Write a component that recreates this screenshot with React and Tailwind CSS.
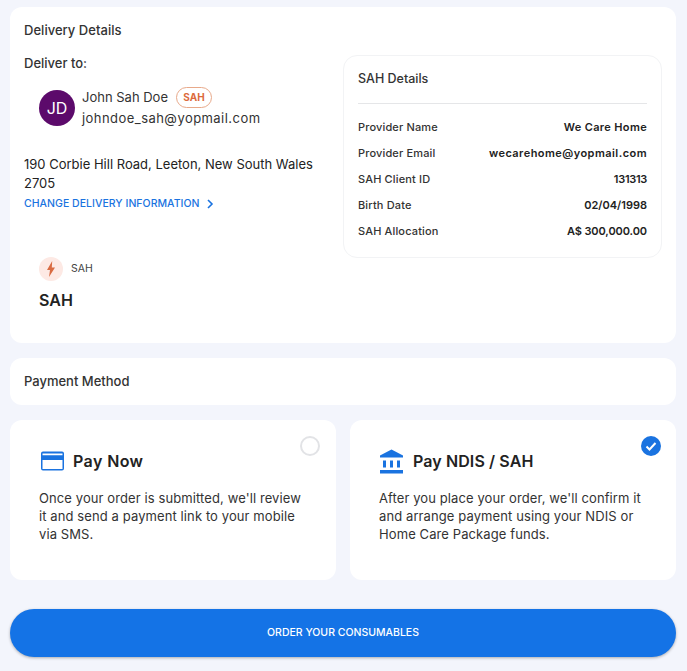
export default function App() {
  const rows = [
    ["Provider Name", "We Care Home", "tracking-[0.35px]"],
    ["Provider Email", "wecarehome@yopmail.com", "tracking-[0.45px]"],
    ["SAH Client ID", "131313", "tracking-[-0.3px]"],
    ["Birth Date", "02/04/1998", "tracking-normal"],
    ["SAH Allocation", "A$ 300,000.00", "tracking-[-0.1px]"],
  ];
  return (
    <div className="h-[671px] w-full overflow-hidden bg-[#f3f5fc] pl-[10px] pr-[11px] pt-[7px] font-['Inter',sans-serif] text-[#222]">
      <section className="h-[336px] rounded-xl bg-white pl-[14px] pr-[14px] pt-[15px]">
        <h2 className="text-[13px] leading-[16px] font-medium tracking-[0.03px] text-[#333]">Delivery Details</h2>
        <div className="flex justify-between">
          <div className="w-[300px]">
            <p className="mt-[17px] text-[13px] leading-[16px] font-medium text-[#333]">Deliver to:</p>
            <div className="mt-[16px] ml-[15px] flex items-center gap-[7px]">
              <div className="flex h-9 w-9 items-center justify-center rounded-full bg-[#5c0a6b] text-[16px] text-white">JD</div>
              <div>
                <div className="flex h-[21px] items-center">
                  <span className="text-[13px] text-[#333]">John Sah Doe</span>
                  <span className="ml-[8px] flex h-[21px] w-[36px] items-center justify-center rounded-full border border-[#e8a98a] text-[10px] font-bold text-[#dc6a3c]">SAH</span>
                </div>
                <p className="text-[13px] leading-[20px] tracking-[0.45px] text-[#333]">johndoe_sah@yopmail.com</p>
              </div>
            </div>
            <p className="mt-[27px] text-[13px] leading-[19px] text-[#222]">190 Corbie Hill Road, Leeton, New South Wales 2705</p>
            <a className="mt-[2px] flex items-center gap-[5px] text-[10.5px] leading-[18px] font-medium tracking-[0.03px] text-[#1a73e0]">
              CHANGE DELIVERY INFORMATION
              <svg width="10" height="10" viewBox="0 0 10 10" fill="none" stroke="#1a73e0" strokeWidth="1.6"><path d="M3 1l4 4-4 4" /></svg>
            </a>
            <div className="mt-[44px] ml-[15px]">
              <div className="flex items-center gap-[8px]">
                <div className="flex h-6 w-6 items-center justify-center rounded-full bg-[#fde9e4]">
                  <svg width="10" height="16" viewBox="0 0 10 16" fill="#d96b42"><path d="M6.200 0 1 9h3L3 16l6-9.500H5.800z" /></svg>
                </div>
                <span className="text-[10.5px] text-[#444]">SAH</span>
              </div>
              <p className="mt-[9px] text-[16px] leading-[20px] font-semibold text-[#222]">SAH</p>
            </div>
          </div>
          <aside className="mt-[17px] h-[203px] w-[319px] rounded-[14px] border border-[#f2f3f5] px-[14px] pt-[14px]">
            <h3 className="text-[12.5px] leading-[18px] font-medium text-[#333]">SAH Details</h3>
            <div className="mt-[15px] h-px bg-[#e5e6e8]"></div>
            <div className="mt-[10px]">
              {rows.map(([k, v, t]) => (
                <div key={k} className="flex h-[26px] items-center justify-between text-[11px]">
                  <span className="font-medium tracking-[0.15px] text-[#333]">{k}</span>
                  <span className={"font-semibold text-[#222] " + t}>{v}</span>
                </div>
              ))}
            </div>
          </aside>
        </div>
      </section>

      <section className="mt-[15px] flex h-[47px] items-center rounded-xl bg-white px-[14px] text-[13px] font-medium text-[#333]">Payment Method</section>

      <div className="mt-[15px] grid grid-cols-2 gap-[14px]">
        <div className="relative h-[160px] rounded-xl bg-white pl-[29px] pr-[34px] pt-[30px]">
          <span className="absolute right-[16px] top-[16px] h-5 w-5 rounded-full border-2 border-[#e2e3e6]"></span>
          <div className="flex h-[22px] items-center gap-[9px]">
            <svg width="24" height="24" viewBox="0 0 24 24" fill="#1a73e0" className="ml-px"><path fillRule="evenodd" d="M3 2.500h19a2 2 0 0 1 2 2v15a2 2 0 0 1-2 2H3a2 2 0 0 1-2-2v-15a2 2 0 0 1 2-2zm-.5 2v1.800h20V4.500zm0 6.500v9h20v-9z" /></svg>
            <h3 className="text-[16px] font-semibold tracking-[0.4px] text-[#222]">Pay Now</h3>
          </div>
          <p className="mt-[17px] text-[13px] leading-[18px] tracking-[0.1px] text-[#333]">Once your order is submitted, we'll review it and send a payment link to your mobile via SMS.</p>
        </div>
        <div className="relative h-[160px] rounded-xl bg-white pl-[29px] pr-[34px] pt-[30px]">
          <svg className="absolute right-[15px] top-[16px]" width="20" height="20" viewBox="0 0 20 20"><circle cx="10" cy="10" r="10" fill="#1a73e0" /><path d="M5.500 10.500l3 3 6-6.500" fill="none" stroke="#fff" strokeWidth="2" /></svg>
          <div className="flex h-[22px] items-center gap-[9px]">
            <svg width="25" height="25" viewBox="0 0 25 25" fill="#1a73e0"><path d="M12.500 0.500 24 6.500v2H1v-2zM4 11.500h3v7H4zM11 11.500h3v7h-3zM18 11.500h3v7h-3zM1 21h23v3.500H1z" /></svg>
            <h3 className="text-[16px] font-semibold tracking-[0.1px] text-[#222]">Pay NDIS / SAH</h3>
          </div>
          <p className="mt-[17px] text-[13px] leading-[18px] tracking-[0.1px] text-[#333]">After you place your order, we'll confirm it and arrange payment using your NDIS or Home Care Package funds.</p>
        </div>
      </div>

      <button className="mt-[29px] flex h-[48px] w-full items-center justify-center rounded-full bg-[#1473e6] text-[10.5px] font-medium text-white shadow-[0_1px_3px_rgba(0,0,0,0.3)]">ORDER YOUR CONSUMABLES</button>
    </div>
  );
}
